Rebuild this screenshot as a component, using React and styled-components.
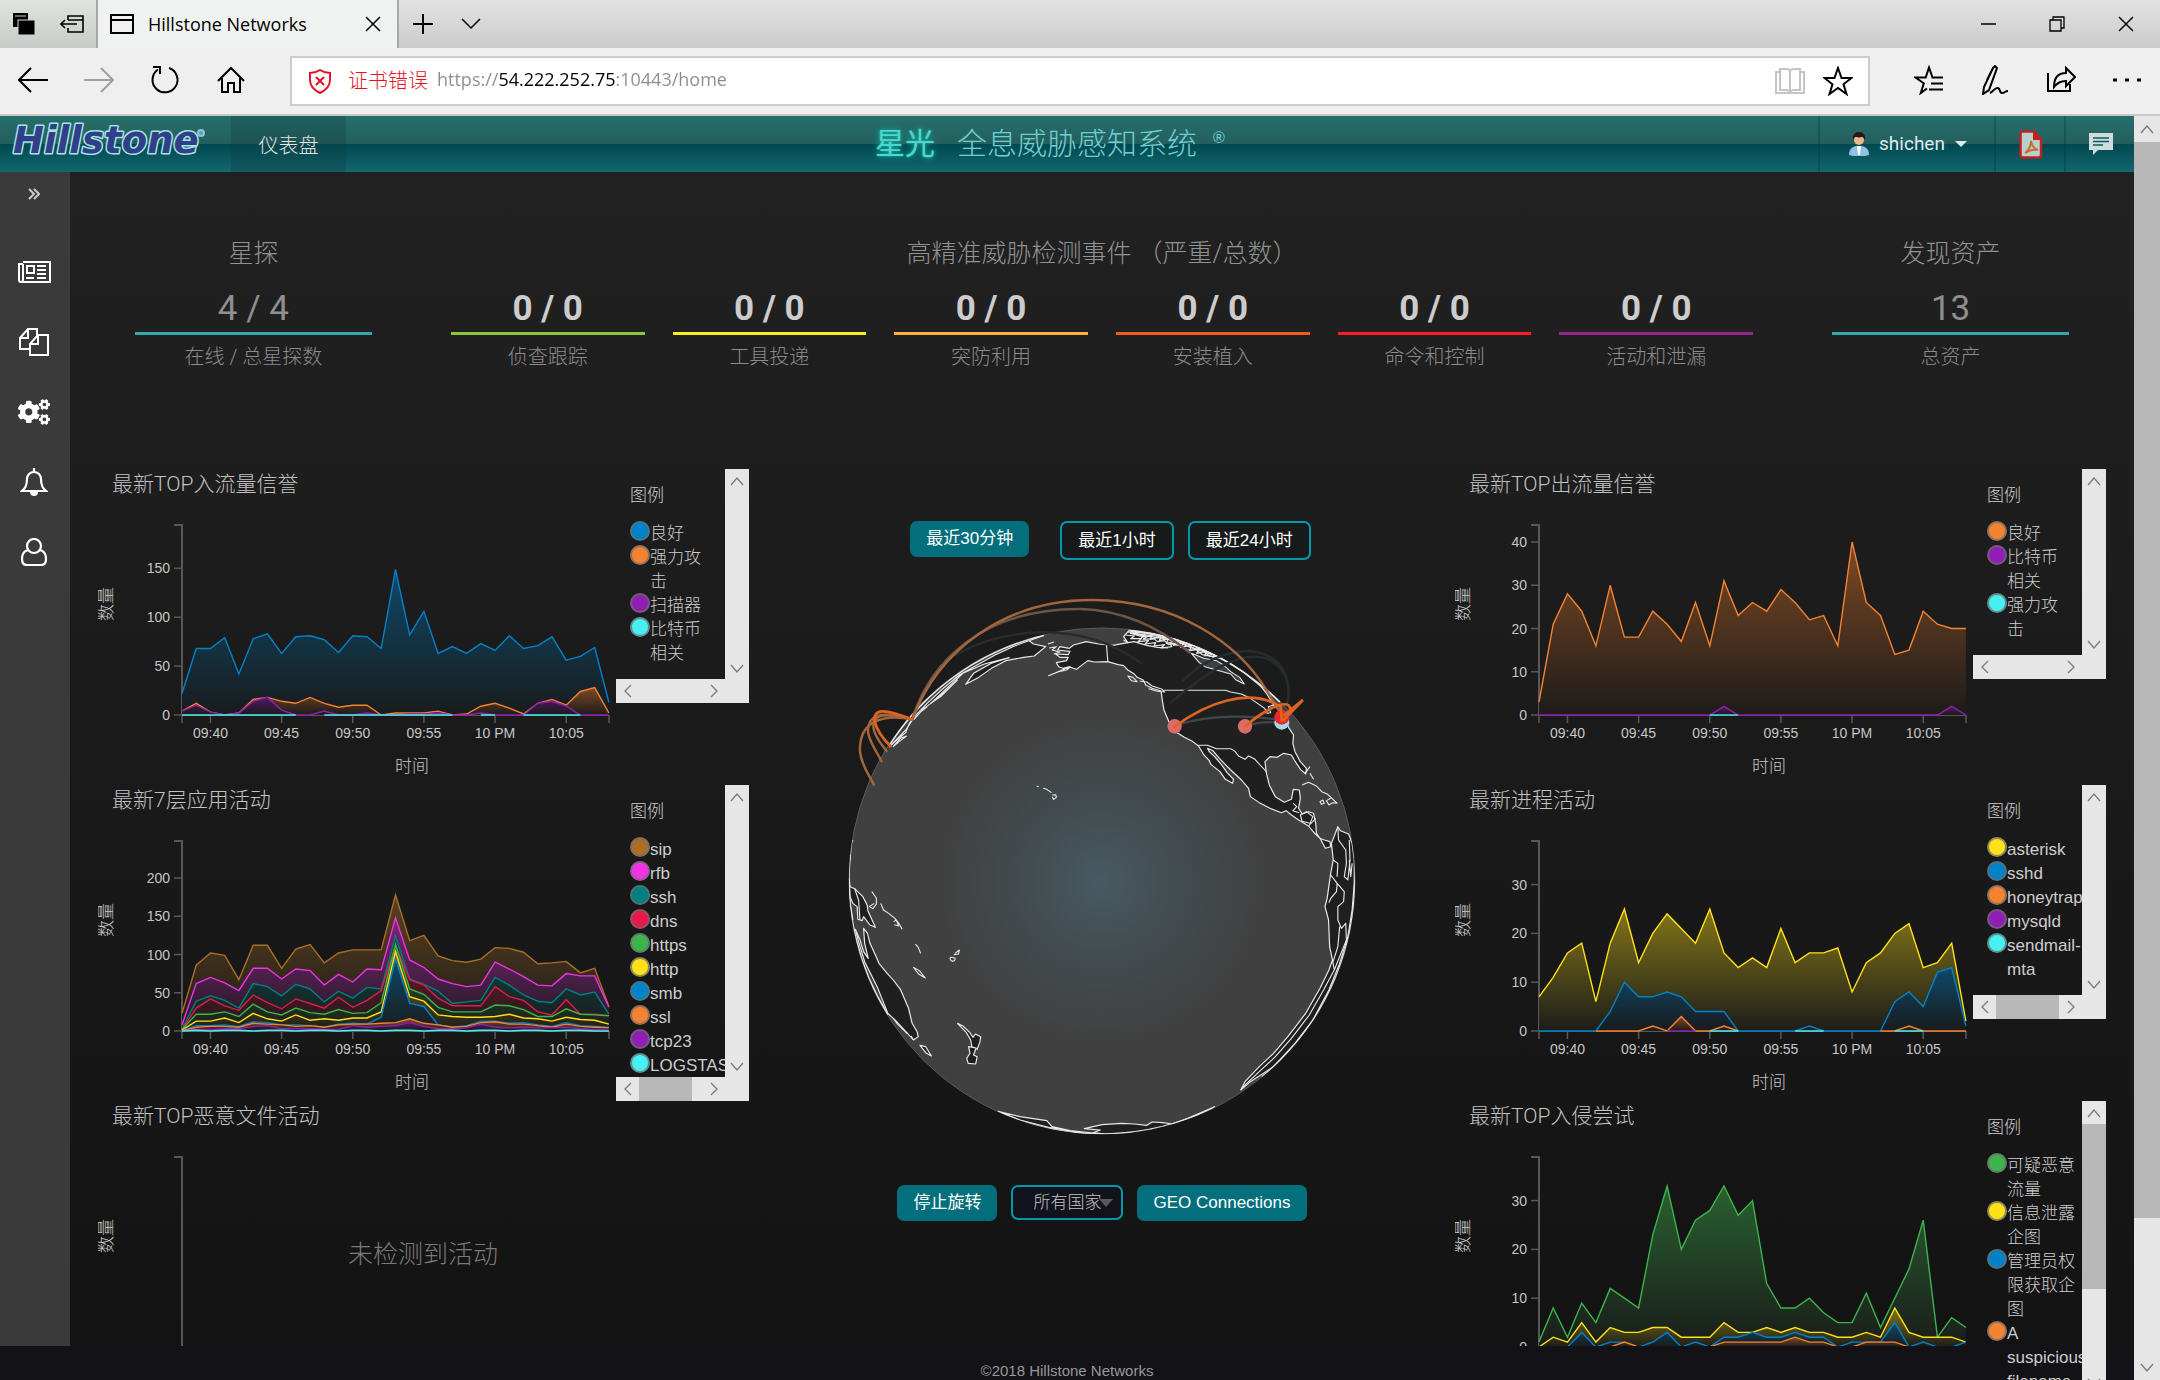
import React, { useId } from "react";
import styled, { createGlobalStyle, css } from "styled-components";
import { FaCogs } from "react-icons/fa";

const ui = '"Open Sans", "Noto Sans CJK SC", sans-serif';
const sans = '"Liberation Sans", "Noto Sans CJK SC", sans-serif';
const display = 'Roboto, "Noto Sans CJK SC", sans-serif';

const GlobalStyle = createGlobalStyle`
  *, *::before, *::after { box-sizing: border-box; }
  body { margin: 0; background: #121217; font-family: ${sans}; }
  button, select, input { font: inherit; color: inherit; }
  svg { display: block; }
`;

/* ---------- browser window ---------- */

const Window = styled.div`
  display: flex;
  flex-direction: column;
  height: 100vh;
  overflow: hidden;
`;

const TabStrip = styled.div`
  display: flex;
  flex: 0 0 48px;
  color: #000;
  background: linear-gradient(#e2e2e2, #cbcbcb);
`;

const TabTools = styled.div`
  display: flex;
  background: linear-gradient(#dfe4e0, #c6ccc8);
`;

const IconButton = styled.button`
  display: flex;
  align-items: center;
  justify-content: center;
  width: ${(p) => p.$w}px;
  height: 100%;
  padding: 0;
  border: 0;
  background: none;
  color: ${(p) => p.$color || "#000"};
`;

const Tab = styled.div`
  display: flex;
  align-items: center;
  width: 303px;
  padding-left: 12px;
  border: solid #a6a9a7;
  border-width: 0 2px;
  background: #f0f1f1;
  font: 18px/24px ${ui};
`;

const TabTitle = styled.span`
  flex: 1;
  padding-left: 14px;
  white-space: nowrap;
`;

const WindowControls = styled.div`
  display: flex;
  margin-left: auto;
`;

const Toolbar = styled.div`
  display: flex;
  flex: 0 0 68px;
  padding-bottom: 2px;
  background: #efefef;
  border-bottom: 2px solid #c8c8c8;
`;

const AddressBar = styled.form`
  display: flex;
  flex: 1;
  align-items: center;
  margin: 8px 26px 6px;
  padding: 0 6px 0 16px;
  border: 2px solid #cdcdcd;
  background: #fff;
`;

const CertError = styled.label`
  padding: 0 9px 0 16px;
  color: #e81123;
  font: 300 20px/24px ${ui};
  white-space: nowrap;
`;

const UrlInput = styled.input`
  flex: 1;
  min-width: 0;
  height: 30px;
  margin-bottom: 4px;
  padding: 0;
  border: 0;
  outline: 0;
  font: 18px/24px ${ui};
  color: transparent;
  background: linear-gradient(90deg, #8c8c8c 62px, #000 62px, #000 178px, #8c8c8c 178px);
  background-clip: text;
  -webkit-background-clip: text;
`;

/* ---------- scroll bars ---------- */

const Bar = styled.div`
  display: flex;
  flex-direction: ${(p) => (p.$vertical ? "column" : "row")};
  background: #e6e6e6;
`;

const Track = styled.div`
  display: flex;
  flex: 1;
  min-height: 0;
  min-width: 0;
  flex-direction: ${(p) => (p.$vertical ? "column" : "row")};
`;

const Thumb = styled.div`
  flex: 0 0 ${(p) => p.$size}%;
  background: #b8b8b8;
`;

const ArrowButton = styled.button`
  display: flex;
  flex: 0 0 ${(p) => p.$size}px;
  align-items: center;
  justify-content: center;
  padding: 0;
  border: 0;
  background: none;
`;

const ARROWS = {
  up: "M1 11 L7 4 L13 11",
  down: "M1 4 L7 11 L13 4",
  left: "M10 1 L4 7 L10 13",
  right: "M4 1 L10 7 L4 13",
};

function ScrollArrow({ dir, size }) {
  return (
    <ArrowButton type="button" $size={size} aria-label={`Scroll ${dir}`}>
      <svg width="14" height="14" viewBox="0 0 14 14" fill="none" stroke="#7a7a7a" strokeWidth="1.3">
        <path d={ARROWS[dir]} />
      </svg>
    </ArrowButton>
  );
}

function ScrollBar({ vertical, size = 23, thumb = 0 }) {
  return (
    <Bar $vertical={vertical}>
      <ScrollArrow dir={vertical ? "up" : "left"} size={size} />
      <Track $vertical={vertical}>{thumb > 0 && <Thumb $size={thumb} />}</Track>
      <ScrollArrow dir={vertical ? "down" : "right"} size={size} />
    </Bar>
  );
}

/* ---------- application frame ---------- */

const Viewport = styled.div`
  display: grid;
  flex: 1;
  min-height: 0;
  grid-template-columns: minmax(0, 1fr) 26px;
`;

const Page = styled.div`
  display: flex;
  flex-direction: column;
  min-height: 0;
  overflow: hidden;
  background: #121217;
`;

const Header = styled.header`
  display: grid;
  flex: 0 0 56px;
  grid-template-columns: 1fr auto 1fr;
  background: linear-gradient(#256f6b 0%, #245e5f 50%, #00484f 50%, #14676f 100%);
`;

const HeaderStart = styled.div`
  display: flex;
`;

const HeaderEnd = styled.div`
  display: flex;
  justify-content: flex-end;
`;

const LogoLink = styled.a`
  width: 231px;
`;

const NavLink = styled.a`
  display: flex;
  align-items: center;
  justify-content: center;
  width: 115px;
  background: rgba(20, 60, 65, 0.3);
  color: #e4e4e4;
  font-size: 20px;
  font-weight: 300;
  text-decoration: none;
`;

const ProductTitle = styled.h1`
  display: flex;
  align-items: center;
  gap: 22px;
  margin: 0;
  padding-right: 34px;
  color: #6fd0d2;
  font: 300 30px/56px ${sans};
  white-space: nowrap;
`;

const Glow = styled.strong`
  color: #4fd5ca;
  font-weight: 400;
  text-shadow: 0 0 6px #12b5a5, 0 0 2px #12b5a5;
`;

const Registered = styled.span`
  align-self: flex-start;
  margin-left: -6px;
  font-size: 16px;
  line-height: 44px;
`;

const HeaderButton = styled.button`
  display: flex;
  align-items: center;
  justify-content: center;
  gap: 10px;
  width: ${(p) => p.$w}px;
  padding: 0 10px 0 12px;
  border: 0;
  border-left: 2px solid rgba(0, 50, 55, 0.3);
  background: none;
  color: #dcebeb;
  font: 19px/24px ${display};
`;

const Body = styled.div`
  display: flex;
  flex: 1;
  min-height: 0;
`;

const Sidebar = styled.nav`
  display: flex;
  flex: 0 0 70px;
  flex-direction: column;
  padding-right: 2px;
  background: #3a3a3a;
`;

const SideLink = styled.a`
  display: flex;
  flex: 0 0 ${(p) => (p.$small ? 44 : 70)}px;
  align-items: center;
  justify-content: center;
  margin-bottom: ${(p) => (p.$small ? 21 : 0)}px;
  color: ${(p) => (p.$small ? "#ccc" : "#fff")};
`;

const Main = styled.main`
  display: flex;
  flex: 1;
  min-width: 0;
  flex-direction: column;
  background: linear-gradient(#212121, #131313);
`;

const Footer = styled.footer`
  flex: 0 0 34px;
  padding-top: 16px;
  color: #98989c;
  font-size: 15px;
  line-height: 18px;
  text-align: center;
`;

/* ---------- figures at the top ---------- */

const Stats = styled.section`
  display: grid;
  flex: 0 0 297px;
  grid-template-columns: 2fr 11fr 2fr;
  align-content: start;
  gap: 79px;
  padding: 66px 65px 0;
`;

const StatTitle = styled.h2`
  margin: 0 0 19px;
  color: #929292;
  font: 300 25px/32px ${display};
  text-align: center;
`;

const StatGroup = styled.div`
  display: grid;
  grid-template-columns: repeat(6, 1fr);
  gap: 28px;
`;

const StatBox = styled.div`
  display: flex;
  flex-direction: column;
  gap: 8px;
`;

const StatValue = styled.div`
  height: 46px;
  border-bottom: 3px solid ${(p) => p.$color};
  color: ${(p) => (p.$strong ? "#ccc" : "#8f8f8f")};
  font: ${(p) => (p.$strong ? 700 : 400)} 35px/40px ${display};
  text-align: center;
`;

const StatLabel = styled.div`
  color: #8c8c8c;
  font: 300 20px/28px ${display};
  text-align: center;
`;

function Stat({ value, label, color, strong }) {
  return (
    <StatBox>
      <StatValue $color={color} $strong={strong}>{value}</StatValue>
      <StatLabel>{label}</StatLabel>
    </StatBox>
  );
}

const EVENTS = [
  ["侦查跟踪", "#8cc63f"],
  ["工具投递", "#fcee21"],
  ["突防利用", "#fbb03b"],
  ["安装植入", "#f15a24"],
  ["命令和控制", "#ff1d25"],
  ["活动和泄漏", "#93278f"],
];

/* ---------- panels with charts ---------- */

const Columns = styled.div`
  display: grid;
  flex: 1;
  min-height: 0;
  grid-template-columns: 651fr 706fr 651fr;
  grid-template-rows: minmax(0, 1fr);
  padding: 0 28px;
`;

const PanelColumn = styled.div`
  display: flex;
  flex-direction: column;
  min-height: 0;
`;

const PanelBox = styled.section`
  display: flex;
  flex: 0 0 316px;
  align-items: flex-start;

  &:last-child {
    flex: 1;
    min-height: 0;
  }
`;

const ChartArea = styled.div`
  flex: 1;
  min-width: 0;
  height: 100%;
  overflow: hidden;
`;

const PanelTitle = styled.h3`
  margin: 0;
  padding-left: 14px;
  color: #c2c2c2;
  font: 300 21px/30px ${display};
`;

const ChartSvg = styled.svg`
  width: 100%;
  height: 286px;
  font-family: ${sans};
  font-size: 14px;
  fill: #c6c6c6;
`;

const ChartNote = styled.text`
  font-size: 17px;
  font-weight: 300;
`;

const EmptyNote = styled.text`
  font-size: 25px;
  font-weight: 300;
  fill: #7a7a7a;
`;

const LegendBox = styled.aside`
  position: relative;
  z-index: 1;
  display: grid;
  flex: 0 0 133px;
  grid-template-columns: minmax(0, 1fr) 24px;
  grid-template-rows: minmax(0, 1fr) 24px;
  max-height: 316px;
`;

const LegendBody = styled.div`
  padding: 15px 0 13px 14px;
  overflow: hidden;
  color: #cdcdcd;
  font: 300 17px/24px ${sans};
`;

const LegendTitle = styled.h4`
  margin: 0 0 14px;
  font: inherit;
`;

const LegendList = styled.ul`
  margin: 0;
  padding: 0;
  list-style: none;
`;

const LegendItem = styled.li`
  display: flex;
`;

const Dot = styled.span`
  flex: 0 0 20px;
  height: 20px;
  margin-top: -1px;
  border: 2px solid rgba(110, 110, 110, 0.75);
  border-radius: 50%;
  background: ${(p) => p.$color};
`;

const LegendText = styled.span`
  flex: 0 0 ${(p) => p.$w}px;
`;

const Corner = styled.div`
  background: #e6e6e6;
`;

const TICKS = ["09:40", "09:45", "09:50", "09:55", "10 PM", "10:05"];
const BASE = 216;
const LEFT = 84;
const STEP = 14.23;

const at = (value, i, unit) => `${(LEFT + i * STEP).toFixed(1)} ${(BASE - value * unit).toFixed(1)}`;

/* A null value leaves a gap in the line. */
function Series({ color, values, unit }) {
  const id = useId();
  const line = values
    .map((v, i) => (v === null ? "" : (i === 0 || values[i - 1] === null ? "M" : "L") + at(v, i, unit)))
    .join("");
  const area = `M${at(0, 0, unit)}${values.map((v, i) => "L" + at(v || 0, i, unit)).join("")}L${at(0, values.length - 1, unit)}Z`;
  const flat = values.every((v) => !v);
  return (
    <g>
      {!flat && (
        <>
          <linearGradient id={id} x1="0" y1="0" x2="0" y2="1">
            <stop offset="0" stopColor={color} stopOpacity="0.46" />
            <stop offset="1" stopColor={color} stopOpacity="0.02" />
          </linearGradient>
          <path d={area} fill="#191919" />
          <path d={area} fill={`url(#${id})`} />
        </>
      )}
      <path d={line} fill="none" stroke={color} strokeWidth="1.4" />
    </g>
  );
}

function TimeAxis() {
  return (
    <g>
      <path d={`M${LEFT} ${BASE}v8M511 ${BASE}v8`} stroke="#585858" strokeWidth="1.5" />
      {TICKS.map((t, i) => {
        const x = LEFT + (2 + i * 5) * STEP;
        return (
          <g key={t}>
            <path d={`M${x} ${BASE}v8`} stroke="#585858" strokeWidth="1.5" />
            <text x={x} y="239" textAnchor="middle">{t}</text>
          </g>
        );
      })}
      <ChartNote x="314" y="273" textAnchor="middle">时间</ChartNote>
    </g>
  );
}

function Chart({ unit, marks, series, empty, timeAxis }) {
  return (
    <ChartSvg viewBox="0 0 518 286" preserveAspectRatio="xMinYMin meet">
      <path d={`M76 26H${LEFT}V${BASE}H511`} fill="none" stroke="#585858" strokeWidth="2" />
      {marks.map((m) => (
        <g key={m}>
          <path d={`M76 ${BASE - m * unit}h8`} stroke="#585858" strokeWidth="1.5" />
          <text x="72" y={BASE - m * unit + 5} textAnchor="end">{m}</text>
        </g>
      ))}
      {timeAxis && <TimeAxis />}
      {series.map((s) => (
        <Series key={s.name} color={s.color} values={s.values} unit={unit} />
      ))}
      <ChartNote transform="translate(14 105) rotate(-90)" textAnchor="middle">数量</ChartNote>
      {empty && <EmptyNote x="325" y="132" textAnchor="middle">{empty}</EmptyNote>}
    </ChartSvg>
  );
}

function Panel({ title, unit = 1, marks = [], series = [], empty, timeAxis, textWidth = 56, hThumb, vThumb }) {
  return (
    <PanelBox>
      <ChartArea>
        <PanelTitle>{title}</PanelTitle>
        <Chart unit={unit} marks={marks} series={series} empty={empty} timeAxis={timeAxis} />
      </ChartArea>
      {series.length > 0 && (
        <LegendBox>
          <LegendBody>
            <LegendTitle>图例</LegendTitle>
            <LegendList>
              {series.map((s) => (
                <LegendItem key={s.name}>
                  <Dot $color={s.color} />
                  <LegendText $w={textWidth}>{s.name}</LegendText>
                </LegendItem>
              ))}
            </LegendList>
          </LegendBody>
          <ScrollBar vertical thumb={vThumb} />
          <ScrollBar thumb={hThumb} />
          <Corner />
        </LegendBox>
      )}
    </PanelBox>
  );
}

const C = {
  blue: "#0082c8", orange: "#f58231", purple: "#911eb4", cyan: "#46f0f0", brown: "#aa6e28",
  pink: "#f032e6", teal: "#008080", red: "#e6194b", green: "#3cb44b", yellow: "#ffe119",
};

const spikes = (points) => Array.from({ length: 31 }, (_, i) => points[i] || 0);
const zerosAt = (ranges) =>
  Array.from({ length: 31 }, (_, i) => (ranges.some(([a, b]) => i >= a && i <= b) ? 0 : null));

const INBOUND = [
  { name: "良好", color: C.blue, values: [22, 68, 68, 79, 42, 78, 83, 63, 80, 81, 77, 64, 81, 80, 68, 149, 82, 106, 63, 70, 63, 73, 66, 81, 68, 71, 80, 56, 60, 69, 13] },
  { name: "强力攻击", color: C.orange, values: [4, 12, 3, 0, 2, 16, 18, 14, 12, 18, 12, 8, 10, 10, 0, 2, 2, 2, 4, 0, 1, 9, 12, 7, 1, 12, 16, 10, 24, 28, 2] },
  { name: "扫描器", color: C.purple, values: [4, 10, 3, 0, 2, 14, 18, 5, 0, 0, 4, 0, 0, 2, 0, 0, 1, 1, 2, 0, 0, 2, 0, 0, 0, 12, 14, 9, 0, 0, 0] },
  { name: "比特币相关", color: C.cyan, values: zerosAt([[0, 8], [10, 19], [21, 22], [24, 28]]) },
];

const APPS = [
  { name: "sip", color: C.brown, values: [23, 86, 102, 99, 67, 112, 112, 82, 107, 113, 89, 102, 106, 106, 106, 178, 118, 125, 98, 92, 90, 94, 109, 108, 103, 88, 89, 91, 76, 82, 32] },
  { name: "rfb", color: C.pink, values: [8, 62, 70, 63, 53, 82, 82, 68, 81, 79, 60, 74, 64, 81, 80, 148, 93, 83, 68, 62, 58, 60, 90, 81, 71, 60, 59, 75, 72, 72, 31] },
  { name: "ssh", color: C.teal, values: [3, 39, 46, 40, 30, 62, 58, 46, 61, 55, 38, 52, 43, 57, 55, 124, 68, 61, 52, 36, 38, 40, 70, 60, 47, 39, 37, 55, 47, 51, 22] },
  { name: "dns", color: C.red, values: [2, 30, 42, 33, 27, 47, 37, 29, 42, 36, 30, 44, 31, 40, 53, 112, 67, 60, 43, 33, 33, 33, 58, 45, 40, 25, 21, 41, 22, 22, 20] },
  { name: "https", color: C.green, values: [2, 22, 22, 25, 19, 35, 25, 21, 30, 24, 22, 28, 23, 24, 37, 113, 55, 48, 31, 25, 25, 25, 34, 33, 28, 19, 19, 29, 22, 21, 20] },
  { name: "http", color: C.yellow, values: [1, 13, 13, 17, 11, 23, 16, 13, 21, 14, 16, 14, 17, 17, 25, 104, 45, 39, 21, 19, 18, 18, 19, 22, 17, 16, 13, 18, 15, 14, 9] },
  { name: "smb", color: C.blue, values: [0, 7, 7, 8, 6, 12, 11, 8, 8, 7, 5, 9, 10, 9, 18, 94, 36, 32, 8, 5, 7, 13, 13, 10, 11, 8, 6, 11, 7, 6, 5] },
  { name: "ssl", color: C.orange, values: [0, 5, 6, 6, 5, 10, 9, 8, 6, 7, 5, 8, 9, 9, 10, 11, 16, 10, 8, 5, 6, 11, 12, 9, 9, 7, 5, 9, 6, 5, 4] },
  { name: "tcp23", color: C.purple, values: [0, 2, 2, 3, 3, 6, 7, 3, 3, 3, 2, 2, 7, 5, 6, 7, 11, 6, 3, 3, 4, 9, 5, 4, 5, 4, 4, 5, 3, 2, 1] },
  { name: "LOGSTASH", color: C.cyan, values: [0, 1, 0, 1, 1, 0, 1, 1, 0, 1, 1, 0, 1, 1, 0, 1, 1, 0, 1, 1, 0, 1, 1, 0, 1, 1, 0, 1, 1, 0, 0] },
];

const OUTBOUND = [
  { name: "良好", color: C.orange, values: [3, 21, 28, 24, 16, 30, 18, 18, 24, 21, 17, 26, 16, 31, 23, 26, 24, 29, 26, 22, 23, 16, 40, 26, 23, 14, 15, 24, 21, 20, 20] },
  { name: "比特币相关", color: C.purple, values: spikes({ 13: 2, 29: 2 }) },
  { name: "强力攻击", color: C.cyan, values: zerosAt([[12, 14]]) },
];

const PROCESSES = [
  { name: "asterisk", color: C.yellow, values: [7, 11, 16, 18, 6, 18, 25, 14, 20, 24, 21, 18, 25, 16, 13, 15, 13, 21, 14, 16, 16, 17, 8, 14, 16, 20, 22, 13, 14, 18, 2] },
  { name: "sshd", color: C.blue, values: [0, 0, 0, 0, 0, 4, 10, 7, 7, 8, 7, 4, 4, 4, 0, 0, 0, 0, 0, 1, 0, 0, 0, 0, 0, 6, 8, 5, 12, 13, 1] },
  { name: "honeytrap", color: C.orange, values: [null, null, null, null, 0, 0, 0, 0, 1, 0, 3, 0, 0, 1, 0, null, null, null, null, null, null, null, null, null, 0, 0, 1, 0, 0, 0, 0] },
  { name: "mysqld", color: C.purple, values: zerosAt([[9, 11]]) },
  { name: "sendmail-mta", color: C.cyan, values: zerosAt([[12, 14], [18, 20], [25, 27]]) },
];

const INTRUSIONS = [
  { name: "可疑恶意流量", color: C.green, values: [1, 8, 2, 9, 5, 12, 10, 8, 23, 33, 20, 26, 28, 33, 27, 30, 13, 8, 8, 10, 7, 5, 5, 11, 4, 10, 16, 26, 2, 6, 4] },
  { name: "信息泄露企图", color: C.yellow, values: [0, 2, 1, 5, 1, 4, 3, 3, 4, 4, 2, 2, 2, 5, 3, 3, 4, 3, 4, 3, 3, 2, 2, 3, 2, 8, 3, 2, 2, 2, 1] },
  { name: "管理员权限获取企图", color: C.blue, values: [0, 0, 0, 3, 0, 1, 1, 0, 1, 3, 0, 1, 0, 2, 2, 3, 2, 2, 3, 2, 2, 0, 1, 1, 1, 5, 0, 1, 0, 0, 1] },
  { name: "A suspicious filename", color: C.orange, values: [0, 0, 0, 0, 0, 0, 1, 0, 0, 0, 0, 0, 0, 1, 1, 1, 1, 1, 2, 1, 1, 0, 0, 1, 1, 1, 0, 0, 0, 0, 0] },
];

/* ---------- globe ---------- */

const GlobeColumn = styled.section`
  display: flex;
  flex-direction: column;
  align-items: center;
  padding-top: 52px;
`;

const ButtonRow = styled.div`
  display: flex;
  align-items: flex-start;
  gap: 14px;
  height: 39px;
  padding-left: ${(p) => (p.$offset ? 17 : 0)}px;
`;

const Button = styled.button`
  height: ${(p) => (p.$outline ? 39 : 36)}px;
  margin-right: ${(p) => (p.$apart ? 17 : 0)}px;
  padding: 0 16px;
  border: 0;
  border-radius: 7px;
  background: #036f7c;
  color: #fff;
  font: 17px/24px ${sans};
  white-space: nowrap;
  ${(p) =>
    p.$outline &&
    css`
      border: 2px solid #009aab;
      background: #171a1b;
    `}
`;

const SelectWrap = styled.div`
  display: grid;
  grid-template-columns: 1fr 22px;
  align-items: center;
  width: 112px;
  height: 35px;
  border: 2px solid #009aab;
  border-radius: 7px;
  background: #12121c;
`;

const CountrySelect = styled.select`
  grid-area: 1 / 1 / 2 / 3;
  width: 100%;
  height: 100%;
  padding: 0 0 0 20px;
  border: 0;
  appearance: none;
  background: none;
  color: #c4c4c4;
  font: 300 17px/24px ${sans};
`;

const SelectCaret = styled.svg`
  grid-area: 1 / 2;
  pointer-events: none;
`;

const GlobeSvg = styled.svg`
  width: 560px;
  height: 550px;
  margin: 30px 0 45px;
`;

const LAND = [
  "M640 557L668 545L690 540L700 532L718 538L735 524L750 512L768 516L805 515L835 524L850 527L862 540L880 552L888 562L905 570L912 585L930 595L955 603L958 628L963 660L975 690L980 702L1000 728L1020 742L1040 752L1060 768L1075 795L1090 812L1095 824L1120 845L1135 868L1155 880L1158 868L1140 848L1125 825L1105 800L1090 785L1085 775L1100 782L1118 805L1150 840L1180 870L1200 895L1205 920L1230 938L1260 955L1292 968L1305 962L1320 975L1340 990L1368 1008L1385 1030L1400 1045L1415 1075L1430 1070L1428 1055L1412 1050L1400 1045L1390 1030L1388 1000L1382 970L1368 965L1350 972L1340 955L1345 925L1342 900L1325 898L1320 928L1300 937L1275 920L1258 885L1250 850L1246 815L1260 800L1280 802L1298 790L1320 795L1328 810L1345 838L1360 852L1362 835L1345 815L1330 785L1324 760L1326 735L1312 712L1300 685L1290 665L1270 645L1250 610L1235 590L1190 550L1150 520L1100 490L1040 462L1000 447L930 430L865 422L850 440L862 458L820 466L780 462L745 455L710 465L698 475L672 470L665 480L700 484L695 494L660 492L672 502L695 502L690 512L662 518L668 530L680 535L700 530Z",
  "M600 498L632 470L598 462L585 452L625 437L590 450L540 470L490 495L440 525L390 555L340 600L300 640L265 680L240 720L195 770L215 750L240 728L250 700L275 668L310 640L350 600L400 550L460 522L530 503L480 520L430 550L408 583L440 565L480 535L520 512L570 502Z",
  "M1450 1010L1457 1022L1480 1032L1490 1060L1496 1110L1496 1180L1490 1260L1478 1340L1455 1420L1425 1500L1380 1590L1330 1660L1270 1730L1205 1775L1178 1800L1190 1775L1230 1730L1270 1690L1310 1640L1360 1570L1400 1495L1425 1440L1435 1410L1427 1370L1424 1290L1414 1250L1420 1225L1430 1150L1437 1110L1432 1060Z",
  "M82 1165L84 1190L97 1196L120 1220L132 1245L134 1262L155 1312L140 1305L122 1280L118 1292L106 1288L104 1250L92 1240L84 1220Z",
  "M99 1318L108 1355L125 1415L160 1490L190 1570L212 1592L245 1630L262 1650L275 1640L272 1625L258 1600L248 1555L225 1498L205 1470L188 1450L165 1420L158 1402L140 1360L133 1330L122 1315L125 1360L135 1405L122 1385L112 1350Z",
  "M385 1600L400 1608L420 1628L428 1642L435 1632L450 1640L448 1655L440 1678L425 1670L422 1650L410 1628Z",
  "M416 1670L437 1674L430 1695L440 1700L436 1722L415 1720L411 1705L420 1690Z",
  "M280 1666L296 1670L312 1698L298 1690Z",
  "M498 1864L560 1880L635 1892L650 1910L700 1922L790 1932L820 1932L740 1930L640 1912L560 1890Z",
  "M740 1916L765 1910L790 1904L845 1900L880 1902L915 1906L930 1896L960 1898L985 1902L1030 1885L1105 1850L1050 1878L980 1908L900 1926L800 1932L765 1928L785 1920Z",
];

const COASTS = [
  "M802 463L804 490L806 515M962 601H1135L1150 606L1180 612L1205 625L1225 640L1245 655L1252 670L1262 668L1255 650L1270 645",
  "M1060 766L1085 766L1110 776L1150 776L1162 784L1172 798L1190 808L1200 798L1218 808L1232 825L1250 845",
  "M895 573L915 576L930 588L958 598L965 606L945 604L920 596M862 558L876 562L888 575L872 572Z",
  "M1345 975L1362 965L1380 980L1372 1000L1350 994ZM1325 940L1335 950L1324 962L1342 968M1368 1008L1388 985",
  "M1350 885L1368 877L1390 888L1405 905L1420 912L1440 932L1448 940L1435 938L1425 945L1418 932L1430 925M1400 935L1408 930L1412 940L1404 943ZM1358 850L1372 830M1372 850L1382 868",
  "M1450 1012L1452 1050L1472 1080L1474 1120L1468 1160L1478 1170L1484 1110L1482 1050M1437 1110L1450 1120L1448 1160M1430 1155L1448 1180L1446 1205L1430 1225L1425 1238M1448 1180L1468 1205L1466 1235L1450 1250L1450 1290L1460 1315L1472 1300L1474 1350L1455 1400L1440 1440L1425 1470L1410 1500L1370 1575L1320 1645L1275 1700L1185 1790M1435 1410L1440 1440M1455 1310L1450 1370L1435 1420M1482 1110L1486 1160L1490 1120",
  "M607 888L612 890M625 895L635 898L648 908M650 915L660 914L662 922L654 928L650 920",
  "M145 1205L158 1225L158 1242L148 1256L138 1250L152 1240M170 1240L178 1260L192 1270L210 1285L222 1302L230 1318M206 1295L214 1290L220 1308L208 1304M267 1362L275 1372L282 1390M262 1432L278 1442L295 1464L276 1452ZM366 1402A7 7 0 1 0 378 1404ZM374 1394L388 1392L390 1380L378 1390",
  "M97 1196L108 1230L112 1290M84 1110L88 1060L92 1050M82 1165L83 1230L92 1290",
  "M205 1585L215 1600L245 1632M262 1650L255 1638",
  "M638 462L655 456M642 474L662 470L650 480L672 486L655 492",
  "M300 650L280 668L262 690M310 640L340 618L385 570L355 600ZM205 770L225 745L242 738L225 752Z",
];

const ARCTIC = [
  "M865 420L890 428L880 434L910 432L900 442L930 436L925 448L955 440L950 452L975 446L970 460L1000 452L990 466L1020 458L1010 472L1040 466L1035 482L1060 476L1055 490L1080 484L1078 498L1105 492L1100 505L1130 505L1140 516L1160 524",
  "M855 435L880 438L870 446L900 446L890 455L920 452L910 462L940 458L935 468L965 464L955 474L985 470L980 460L1010 468L1030 480L1055 480L1070 494L1100 500",
  "M862 426L900 434L940 438L980 446L1020 462L1060 480L1110 498L1160 528L1200 556",
  "M870 424L920 430L960 436L1000 450L1050 468L1090 486L1110 500L1090 498L1070 480L1040 474L1000 455L960 445L900 436L868 430",
  "M866 421L880 427L905 428L930 434L955 437L985 444L1005 449M875 430L895 438L915 440L905 448L935 446L945 455L965 452L975 463L995 460",
  "M850 450L862 458L880 455L895 460L915 466L945 472L975 474",
];

function Globe() {
  return (
    <GlobeSvg viewBox="0 0 560 550" role="img" aria-label="Globe">
      <defs>
        <radialGradient id="ocean">
          <stop offset="0" stopColor="#475a62" />
          <stop offset="0.3" stopColor="#434c50" />
          <stop offset="0.65" stopColor="#404040" />
          <stop offset="1" stopColor="#404040" />
        </radialGradient>
        <clipPath id="disc">
          <circle cx="280" cy="291" r="253" />
        </clipPath>
      </defs>
      <circle cx="280" cy="291" r="253" fill="url(#ocean)" stroke="#5a5a5a" />
      <g clipPath="url(#disc)">
        <g transform="translate(-2 -100) scale(0.35714 0.33333)" strokeLinejoin="round">
          <g fill="#1f1f1f" stroke="#e8e8e8" strokeWidth="3.4">
            {LAND.map((d) => <path key={d} d={d} />)}
          </g>
          <path
            d="M1040 490L1062 518L1078 530L1110 540L1150 552L1165 570L1188 582L1175 562L1150 545L1130 525L1110 512L1075 505Z"
            fill="#3c4042" stroke="#e8e8e8" strokeWidth="3"
          />
          <g fill="none" stroke="#e8e8e8" strokeWidth="3.2">
            {COASTS.map((d) => <path key={d} d={d} />)}
          </g>
          <g fill="none" stroke="#e8e8e8" strokeWidth="3.6">
            {ARCTIC.map((d) => <path key={d} d={d} />)}
          </g>
        </g>
        <g fill="none" stroke="#e8e8e8" strokeWidth="2">
          <path d="M28 265A253 253 0 0 0 66 425M533 291A253 253 0 0 1 440 487M176 522A253 253 0 0 0 392 518M68 154A253 253 0 0 1 222 45M310 40A253 253 0 0 1 458 112" />
        </g>
      </g>
      <g transform="translate(-2 -100) scale(0.35714 0.33333)" fill="none" strokeLinecap="round">
        <g stroke="#262d30" strokeWidth="7">
          <path d="M380 495C500 420 720 380 900 520M1015 573C1080 500 1190 460 1260 500C1320 540 1315 610 1308 640M982 638C1080 550 1170 480 1250 505C1300 530 1310 570 1312 600" />
          <path d="M1000 705C1100 670 1220 678 1285 690M1200 706C1230 695 1260 695 1285 698" stroke="#414648" />
        </g>
        <path d="M260 680C310 520 450 355 730 357C870 362 970 430 1035 488" stroke="#6d5546" strokeWidth="7" />
        <path d="M258 690C330 480 520 328 765 330C1000 332 1170 460 1250 600L1290 670" stroke="#a2663f" strokeWidth="7" />
        <g stroke="#a2663f" strokeWidth="7">
          <path d="M256 688C170 660 130 675 135 730C142 765 165 795 172 814M256 688C180 672 108 690 112 785C117 830 140 860 151 884M256 688C175 665 145 675 150 715C155 745 175 765 186 783" />
        </g>
        <ellipse cx="993" cy="709" rx="20" ry="22" fill="#dc6a6a" />
        <ellipse cx="1190" cy="709" rx="20" ry="22" fill="#dc6a6a" />
        <ellipse cx="1293" cy="698" rx="21" ry="21" fill="#a5d8ee" />
        <ellipse cx="1293" cy="682" rx="21" ry="22" fill="#f3242c" />
        <g stroke="#dd6420" strokeWidth="8">
          <path d="M256 688C180 655 148 655 153 695C160 725 180 750 197 768" />
          <path d="M993 710C1080 640 1200 590 1290 650L1293 692" />
          <path d="M1190 710C1220 680 1290 630 1312 646C1325 660 1310 680 1296 692L1352 630L1300 675" />
        </g>
      </g>
    </GlobeSvg>
  );
}

/* ---------- icons ---------- */

function Icon({ w, h = w, sw = 2, children }) {
  return (
    <svg width={w} height={h} viewBox={`0 0 ${w} ${h}`} fill="none" stroke="currentColor" strokeWidth={sw} aria-hidden="true">
      {children}
    </svg>
  );
}

function Logo() {
  return (
    <svg width="231" height="56" viewBox="0 0 231 56" aria-label="Hillstone">
      <text
        x="13" y="37" fontFamily="DejaVu Sans, sans-serif" fontSize="37" fontWeight="700" fontStyle="italic"
        fill="#2f3f88" stroke="#a9e4e4" strokeWidth="3" strokeLinejoin="round" paintOrder="stroke"
      >
        Hillstone
      </text>
      <circle cx="201" cy="17" r="4" fill="#8fc3d8" />
      <circle cx="201" cy="17" r="2" fill="#5f9fc0" />
    </svg>
  );
}

const STAR = "M15 2L18.500 12H28.500L20.500 18.300L23.500 28L15 22L6.500 28L9.500 18.300L1.500 12H11.500Z";

function BrowserChrome() {
  return (
    <>
      <TabStrip>
        <TabTools>
          <IconButton $w={48} aria-label="Tab previews">
            <Icon w={22}>
              <rect x="0" y="0" width="15" height="14" fill="#000" stroke="none" />
              <rect x="5" y="7" width="17" height="15" fill="#000" stroke="#d5dad6" strokeWidth="1" />
              <path d="M2 3h11" stroke="#d5dad6" strokeWidth="1" />
            </Icon>
          </IconButton>
          <IconButton $w={48} aria-label="Set tabs aside">
            <Icon w={24} h={18} sw={1.6}>
              <path d="M8 5V1h15v16H8v-4M8 5h15M1 9h16M5 5L1 9l4 4" />
            </Icon>
          </IconButton>
        </TabTools>
        <Tab>
          <Icon w={24} h={20}><path d="M1 1h22v18H1zM1 6h22" /></Icon>
          <TabTitle>Hillstone Networks</TabTitle>
          <IconButton $w={48} aria-label="Close tab">
            <Icon w={16} sw={1.5}><path d="M1 1l14 14M15 1L1 15" /></Icon>
          </IconButton>
        </Tab>
        <IconButton $w={48} aria-label="New tab">
          <Icon w={20}><path d="M10 0v20M0 10h20" /></Icon>
        </IconButton>
        <IconButton $w={48} aria-label="Tab list">
          <Icon w={20} h={12} sw={1.5}><path d="M1 1l9 9 9-9" /></Icon>
        </IconButton>
        <WindowControls>
          <IconButton $w={69} aria-label="Minimize"><Icon w={16} sw={1.5}><path d="M1 8h15" /></Icon></IconButton>
          <IconButton $w={69} aria-label="Restore">
            <Icon w={16} sw={1.3}><path d="M1 4h11v11H1zM4 4V1h11v11h-3" /></Icon>
          </IconButton>
          <IconButton $w={69} aria-label="Close"><Icon w={16} sw={1.5}><path d="M1 1l14 14M15 1L1 15" /></Icon></IconButton>
        </WindowControls>
      </TabStrip>
      <Toolbar>
        <IconButton $w={66} aria-label="Back"><Icon w={30} h={26}><path d="M1 13h29M13 1L1 13l12 12" /></Icon></IconButton>
        <IconButton $w={66} $color="#a0a0a0" aria-label="Forward"><Icon w={30} h={26}><path d="M0 13h29M17 1l12 12-12 12" /></Icon></IconButton>
        <IconButton $w={66} aria-label="Refresh">
          <Icon w={30} h={30}><path d="M19 3A12.500 12.500 0 1 1 8 4.500M3 2h7v7" /></Icon>
        </IconButton>
        <IconButton $w={66} aria-label="Home">
          <Icon w={28} h={28}><path d="M1 15L14 2l13 13M5 12v14h6v-9h6v9h6V12" /></Icon>
        </IconButton>
        <AddressBar onSubmit={(e) => e.preventDefault()}>
          <Icon w={24} h={26}>
            <g stroke="#e81123">
              <path d="M12 2c3 2 6 3 10 3v7c0 6-4 10-10 13C6 22 2 18 2 12V5c4 0 7-1 10-3z" />
              <path d="M8 9l8 8M16 9l-8 8" />
            </g>
          </Icon>
          <CertError htmlFor="url">证书错误</CertError>
          <UrlInput id="url" defaultValue="https://54.222.252.75:10443/home" spellCheck={false} />
          <IconButton type="button" $w={48} $color="#c4c4c4" aria-label="Reading view">
            <Icon w={30} h={28}>
              <path d="M5 2h6c2 0 4 1 4 3 0-2 2-3 4-3h6v21h-6c-2 0-4 1-4 2 0-1-2-2-4-2H5zM15 5v19M4 5H1v21h28V5h-3" />
            </Icon>
          </IconButton>
          <IconButton type="button" $w={48} aria-label="Add to favorites"><Icon w={30} h={30}><path d={STAR} /></Icon></IconButton>
        </AddressBar>
        <IconButton $w={66} aria-label="Favorites">
          <Icon w={30} h={30}>
            <path d="M29 12.500H18.500L15 2.500l-3.300 10H1.500l8.300 5.800L6.800 28l6.200-4.500M17 18.500h12M15 24.500h14" />
          </Icon>
        </IconButton>
        <IconButton $w={66} aria-label="Web notes">
          <Icon w={28} h={30}>
            <path d="M12 3l2-2 2 2-8 22-6 4 1-7zM12 3L6 15M9 28c3-1 5-6 8-5s1 5 4 5 3-2 6-2" />
          </Icon>
        </IconButton>
        <IconButton $w={66} aria-label="Share">
          <Icon w={30} h={30}><path d="M2 8v18h22v-7M20 3l9 9-9 9v-5c-6 0-9 2-12 6 0-9 4-14 12-14z" /></Icon>
        </IconButton>
        <IconButton $w={66} aria-label="More">
          <Icon w={28} h={4}><path d="M0 2h4M12 2h4M24 2h4" strokeWidth="3" /></Icon>
        </IconButton>
      </Toolbar>
    </>
  );
}

function AppHeader() {
  return (
    <Header>
      <HeaderStart>
        <LogoLink href="#home"><Logo /></LogoLink>
        <NavLink href="#dashboard">仪表盘</NavLink>
      </HeaderStart>
      <ProductTitle>
        <Glow>星光</Glow>
        <span>全息威胁感知系统</span>
        <Registered>®</Registered>
      </ProductTitle>
      <HeaderEnd>
        <HeaderButton $w={176}>
          <svg width="20" height="24" viewBox="0 0 20 24" aria-hidden="true">
            <path d="M0 23c0-6 3-8 7-9h6c4 1 7 3 7 9-6 2-14 2-20 0z" fill="#8fc0e8" />
            <path d="M8 14h4l-1 9H9z" fill="#fff" />
            <circle cx="10" cy="8" r="5" fill="#e8b98a" />
            <path d="M4 8c-1-5 2-8 6-8s7 3 6 8c-1-2-2-3-3-3-3 1-6 0-7 0-1 1-2 1-2 3z" fill="#2c1810" />
          </svg>
          shichen
          <svg width="12" height="6" viewBox="0 0 12 6" aria-hidden="true"><path d="M0 0h12L6 6z" fill="#dcebeb" /></svg>
        </HeaderButton>
        <HeaderButton $w={70} aria-label="PDF report">
          <svg width="24" height="29" viewBox="0 0 24 29" aria-hidden="true">
            <path d="M4 1.500h11l7 8V25c0 2-1 2.500-2.500 2.500H4C2.500 27.500 1.500 27 1.500 25V4c0-1.500 1-2.500 2.500-2.500z" fill="#b9cfd0" stroke="#c1201f" strokeWidth="2.500" />
            <path d="M14 1l9 9h-9z" fill="#c1201f" />
            <path d="M12 11c1 4 2 7 7 9-5-1-9 0-13 3 4-3 6-7 6-12z" fill="none" stroke="#c4702a" strokeWidth="2" />
          </svg>
        </HeaderButton>
        <HeaderButton $w={70} aria-label="Messages">
          <svg width="24" height="22" viewBox="0 0 24 22" aria-hidden="true">
            <path d="M0 0h24v17H9l-5 5v-5H0z" fill="#cfdcdc" />
            <path d="M4 5h16M4 8.500h16M4 12h10" stroke="#0a5a61" strokeWidth="1.300" />
          </svg>
        </HeaderButton>
      </HeaderEnd>
    </Header>
  );
}

function SideNav() {
  return (
    <Sidebar>
      <SideLink $small href="#expand" aria-label="Expand menu">
        <Icon w={12} h={12}><path d="M1 1l5 5-5 5M6 1l5 5-5 5" /></Icon>
      </SideLink>
      <SideLink href="#news" aria-label="Reports">
        <Icon w={33} h={22}>
          <path d="M5 1h27v20H3c-1 0-2-1-2-2V3h4M5 3v16c0 1-1 2-2 2M9 5h7v7H9zM19 5h9M19 9h9M19 13h9M8 17h8M19 17h9" />
        </Icon>
      </SideLink>
      <SideLink href="#files" aria-label="Files">
        <Icon w={30} h={28}>
          <path d="M11 21H1V10l8-9h9v7M9 1v9H1M19 7h10v20H11V16zM19 7v9h-8" />
        </Icon>
      </SideLink>
      <SideLink href="#settings" aria-label="Settings"><FaCogs size={32} /></SideLink>
      <SideLink href="#alerts" aria-label="Alerts">
        <Icon w={28} h={29} sw={2.2}>
          <path d="M2 23c4-3 5-7 5-12 0-4 3-7 7-7s7 3 7 7c0 5 1 9 5 12zM14 4V0" />
          <path d="M10 24h8c0 3-2 4-4 4s-4-1-4-4z" fill="currentColor" stroke="none" />
        </Icon>
      </SideLink>
      <SideLink href="#account" aria-label="Account">
        <Icon w={26} h={28} sw={2.2}>
          <circle cx="13" cy="8" r="7" />
          <path d="M7 12c-4 1-6 5-6 9s2 6 5 6h14c3 0 5-2 5-6s-2-8-6-9" />
        </Icon>
      </SideLink>
    </Sidebar>
  );
}

export default function App() {
  return (
    <Window>
      <GlobalStyle />
      <BrowserChrome />
      <Viewport>
        <Page>
          <AppHeader />
          <Body>
            <SideNav />
            <Main>
              <Stats>
                <div>
                  <StatTitle>星探</StatTitle>
                  <Stat value="4 / 4" label="在线 / 总星探数" color="#33a9a9" />
                </div>
                <div>
                  <StatTitle>高精准威胁检测事件 （严重/总数）</StatTitle>
                  <StatGroup>
                    {EVENTS.map(([label, color]) => (
                      <Stat key={label} strong value="0 / 0" label={label} color={color} />
                    ))}
                  </StatGroup>
                </div>
                <div>
                  <StatTitle>发现资产</StatTitle>
                  <Stat value="13" label="总资产" color="#33a9a9" />
                </div>
              </Stats>
              <Columns>
                <PanelColumn>
                  <Panel title="最新TOP入流量信誉" timeAxis unit={0.978} marks={[0, 50, 100, 150]} series={INBOUND} />
                  <Panel title="最新7层应用活动" timeAxis unit={0.765} marks={[0, 50, 100, 150, 200]} series={APPS} textWidth={72} hThumb={84} />
                  <Panel title="最新TOP恶意文件活动" empty="未检测到活动" />
                </PanelColumn>
                <GlobeColumn>
                  <ButtonRow $offset>
                    <Button $apart>最近30分钟</Button>
                    <Button $outline>最近1小时</Button>
                    <Button $outline>最近24小时</Button>
                  </ButtonRow>
                  <Globe />
                  <ButtonRow>
                    <Button>停止旋转</Button>
                    <SelectWrap>
                      <CountrySelect aria-label="Country" defaultValue="all">
                        <option value="all">所有国家</option>
                      </CountrySelect>
                      <SelectCaret width="14" height="8" viewBox="0 0 14 8"><path d="M0 0h14L7 8z" fill="#595959" /></SelectCaret>
                    </SelectWrap>
                    <Button>GEO Connections</Button>
                  </ButtonRow>
                </GlobeColumn>
                <PanelColumn>
                  <Panel title="最新TOP出流量信誉" timeAxis unit={4.325} marks={[0, 10, 20, 30, 40]} series={OUTBOUND} />
                  <Panel title="最新进程活动" timeAxis unit={4.88} marks={[0, 10, 20, 30]} series={PROCESSES} textWidth={72} hThumb={100} />
                  <Panel title="最新TOP入侵尝试" unit={4.88} marks={[0, 10, 20, 30]} series={INTRUSIONS} textWidth={72} vThumb={67} />
                </PanelColumn>
              </Columns>
            </Main>
          </Body>
          <Footer>©2018 Hillstone Networks</Footer>
        </Page>
        <ScrollBar vertical size={26} thumb={88.8} />
      </Viewport>
    </Window>
  );
}
